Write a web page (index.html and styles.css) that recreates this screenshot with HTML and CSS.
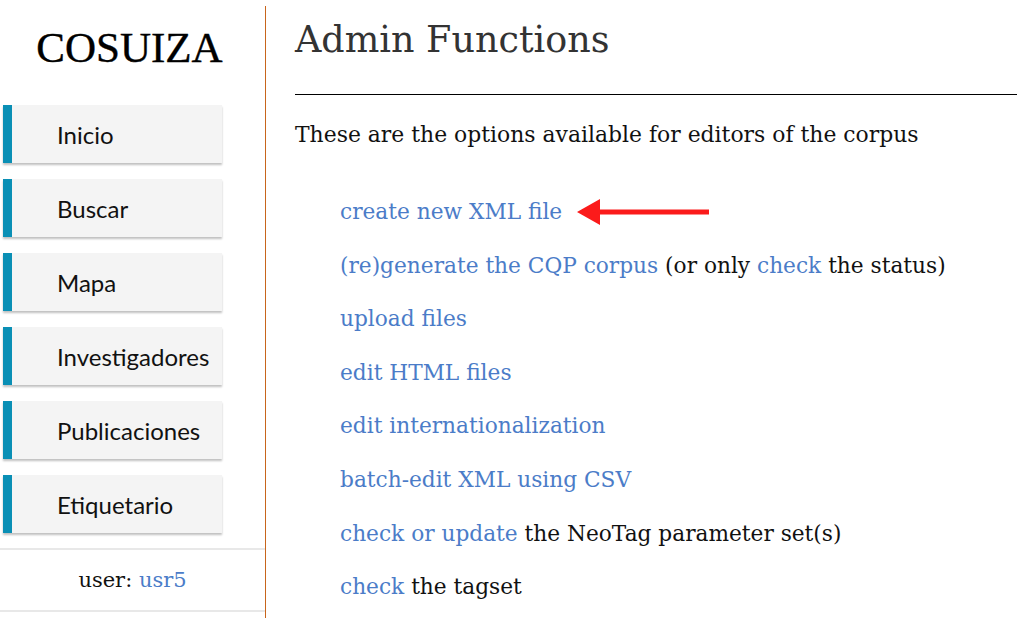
FILE: index.html
```html
<!DOCTYPE html>
<html>
<head>
<meta charset="utf-8">
<link rel="stylesheet" href="styles.css">
</head>
<body>
<div class="page">
  <aside class="sidebar">
    <div class="logo">COSUIZA</div>
    <nav class="nav">
      <a class="nav-btn">Inicio</a>
      <a class="nav-btn">Buscar</a>
      <a class="nav-btn">Mapa</a>
      <a class="nav-btn">Investigadores</a>
      <a class="nav-btn">Publicaciones</a>
      <a class="nav-btn">Etiquetario</a>
    </nav>
    <div class="user"><span>user: <a class="link">usr5</a></span></div>
  </aside>
  <main class="main">
    <h1 class="title">Admin Functions</h1>
    <hr class="rule">
    <p class="intro">These are the options available for editors of the corpus</p>
    <ul class="options">
      <li class="opt"><a class="link">create new XML file</a>
        <svg class="arrow" width="132" height="28" viewBox="0 0 132 28"><path d="M0 14 L23 1 L23 11.5 L132 11.5 L132 16.5 L23 16.5 L23 27 Z" fill="#fb1b1b"/></svg>
      </li>
      <li class="opt"><span><a class="link">(re)generate the CQP corpus</a> (or only <a class="link">check</a> the status)</span></li>
      <li class="opt"><a class="link">upload files</a></li>
      <li class="opt"><a class="link">edit HTML files</a></li>
      <li class="opt"><a class="link">edit internationalization</a></li>
      <li class="opt"><a class="link">batch-edit XML using CSV</a></li>
      <li class="opt"><span><a class="link">check or update</a> the NeoTag parameter set(s)</span></li>
      <li class="opt"><span><a class="link">check</a> the tagset</span></li>
    </ul>
  </main>
</div>
</body>
</html>
```
FILE: styles.css
```css
html, body {
  margin: 0;
  padding: 0;
  background: #fff;
  overflow: hidden;
}
.page {
  display: flex;
  height: 618px;
}
.sidebar {
  width: 265px;
  flex: none;
  margin-top: 6px;
  border-right: 1px solid #c8651b;
  display: flex;
  flex-direction: column;
}
.logo {
  height: 84px;
  line-height: 84px;
  text-align: center;
  font-family: "Liberation Serif", serif;
  font-size: 43px;
  color: #000;
  -webkit-text-stroke: 0.4px #000;
  padding-right: 6px;
}
.nav {
  margin-top: 15px;
  display: flex;
  flex-direction: column;
  gap: 16px;
  padding-left: 3px;
}
.nav-btn {
  display: flex;
  align-items: center;
  box-sizing: border-box;
  width: 219px;
  height: 58px;
  background: #f4f4f4;
  border-left: 9px solid #0a8fb5;
  box-shadow: 0 2px 2px rgba(0,0,0,0.25);
  padding-left: 45px;
  font-family: "Lato", sans-serif;
  font-size: 24px;
  color: #111;
}
.user {
  margin-top: 15px;
  height: 60px;
  border-top: 2px solid #e8e8e8;
  border-bottom: 2px solid #e8e8e8;
  display: flex;
  align-items: center;
  justify-content: center;
  font-family: "DejaVu Serif", serif;
  font-size: 21px;
  color: #111;
  white-space: pre;
}
.link {
  color: #4b7cc8;
  text-decoration: none;
}
.main {
  flex: 1;
  padding-left: 29px;
  font-family: "DejaVu Serif", serif;
  color: #111;
}
.title {
  margin: 16px 0 0 0;
  font-size: 36.5px;
  font-weight: normal;
  color: #333;
  line-height: 48px;
}
.rule {
  margin: 30px 0 0 0;
  border: none;
  border-top: 1px solid #000;
  height: 0;
}
.intro {
  margin: 26px 0 0 0;
  font-size: 21.9px;
  line-height: 28px;
}
.options {
  list-style: none;
  margin: 49px 0 0 0;
  padding-left: 45px;
  display: flex;
  flex-direction: column;
  gap: 25.6px;
}
.opt {
  font-size: 21.7px;
  line-height: 28px;
  display: flex;
  align-items: center;
  white-space: pre;
}
.arrow {
  margin-left: 15px;
}
```
